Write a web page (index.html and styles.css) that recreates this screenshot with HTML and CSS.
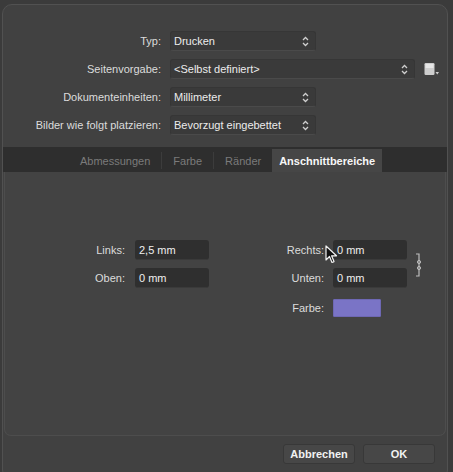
FILE: index.html
```html
<!DOCTYPE html>
<html>
<head>
<meta charset="utf-8">
<link rel="stylesheet" href="styles.css">
</head>
<body>
<div class="window">
  <div class="form">
    <div class="label">Typ:</div>
    <div class="popup w-short"><span>Drucken</span><svg class="arrows" width="7" height="11" viewBox="0 0 7 11"><path d="M1 4 L3.5 1.5 L6 4" /><path d="M1 7 L3.5 9.5 L6 7"/></svg></div>
    <div></div>

    <div class="label">Seitenvorgabe:</div>
    <div class="popup w-long"><span>&lt;Selbst definiert&gt;</span><svg class="arrows" width="7" height="11" viewBox="0 0 7 11"><path d="M1 4 L3.5 1.5 L6 4" /><path d="M1 7 L3.5 9.5 L6 7"/></svg></div>
    <div class="preset-icon"><svg width="16" height="14" viewBox="0 0 16 14"><rect x="0.5" y="1" width="10" height="12" rx="1.2" fill="#cdcdcd"/><rect x="1.5" y="2" width="8" height="4" fill="#e6e6e6"/><path d="M11.5 10 L15 10 L13.25 12.5 Z" fill="#cfcfcf"/></svg></div>

    <div class="label">Dokumenteinheiten:</div>
    <div class="popup w-short"><span>Millimeter</span><svg class="arrows" width="7" height="11" viewBox="0 0 7 11"><path d="M1 4 L3.5 1.5 L6 4" /><path d="M1 7 L3.5 9.5 L6 7"/></svg></div>
    <div></div>

    <div class="label">Bilder wie folgt platzieren:</div>
    <div class="popup w-short"><span>Bevorzugt eingebettet</span><svg class="arrows" width="7" height="11" viewBox="0 0 7 11"><path d="M1 4 L3.5 1.5 L6 4" /><path d="M1 7 L3.5 9.5 L6 7"/></svg></div>
    <div></div>
  </div>

  <div class="tabbar">
    <div class="tab">Abmessungen</div>
    <div class="sep"></div>
    <div class="tab">Farbe</div>
    <div class="sep"></div>
    <div class="tab">Ränder</div>
    <div class="tab active">Anschnittbereiche</div>
  </div>

  <div class="panel">
    <div class="fields">
      <div class="flabel l1">Links:</div>
      <div class="field">2,5 mm</div>
      <div class="flabel l2">Rechts:</div>
      <div class="field">0 mm</div>
      <div class="bracket"><svg width="8" height="25" viewBox="0 0 8 25"><path d="M1 1 H4 V23 H1" fill="none" stroke="#bdbdbd" stroke-width="1.2"/><circle cx="4" cy="9" r="1.6" fill="none" stroke="#bdbdbd" stroke-width="1"/><circle cx="4" cy="15" r="1.6" fill="none" stroke="#bdbdbd" stroke-width="1"/></svg></div>

      <div class="flabel l1">Oben:</div>
      <div class="field">0 mm</div>
      <div class="flabel l2">Unten:</div>
      <div class="field">0 mm</div>

      <div></div>
      <div></div>
      <div class="flabel l2 r3">Farbe:</div>
      <div class="swatch r3"></div>
    </div>
    <svg class="cursor" width="13" height="19" viewBox="0 0 13 19"><path d="M1 1 L1 15 L4.5 11.5 L7 17.5 L9 16.6 L6.6 10.8 L11.5 10.8 Z" fill="#111" stroke="#f2f2f2" stroke-width="1.2" stroke-linejoin="round"/></svg>
  </div>

  <div class="footer">
    <div class="btn">Abbrechen</div>
    <div class="btn">OK</div>
  </div>
</div>
</body>
</html>
```
FILE: styles.css
```css
html, body {
  margin: 0;
  padding: 0;
}
body {
  background: #3b3b3b;
  width: 453px;
  height: 472px;
  overflow: hidden;
  font-family: "Liberation Sans", Arial, sans-serif;
  font-size: 11px;
  color: #e2e2e2;
}
.window {
  position: relative;
  margin: 4px 5px 0 2px;
  height: 476px;
  background: #414141;
  border: 1px solid #515151;
  border-radius: 10px;
  box-sizing: border-box;
  display: flex;
  flex-direction: column;
}
.form {
  display: grid;
  grid-template-columns: 158px 245px 32px;
  grid-auto-rows: 20px;
  row-gap: 8px;
  column-gap: 9px;
  padding-top: 26px;
  align-items: center;
}
.label {
  text-align: right;
  color: #dcdcdc;
  white-space: nowrap;
}
.popup {
  height: 20px;
  box-sizing: border-box;
  background: #3a3a3a;
  border: 1px solid #363636;
  border-bottom-color: #4a4a4a;
  border-radius: 3px;
  display: flex;
  align-items: center;
  justify-content: space-between;
  padding: 0 6px 0 3px;
  color: #ececec;
}
.w-short { width: 146px; }
.w-long { width: 245px; }
.arrows path {
  fill: none;
  stroke: #cfcfcf;
  stroke-width: 1.3;
}
.preset-icon {
  display: flex;
  align-items: center;
  padding-left: 0;
}
.tabbar {
  margin-top: 12px;
  height: 25px;
  background: #2e2e2e;
  display: flex;
  align-items: flex-end;
  padding-left: 66px;
}
.tab {
  height: 23px;
  display: flex;
  align-items: center;
  padding: 0 11px;
  color: #7b7b7b;
}
.sep {
  width: 1px;
  height: 17px;
  margin-bottom: 3px;
  background: #3c3c3c;
}
.tab.active {
  background: #464646;
  color: #f7f7f7;
  font-weight: bold;
  width: 110px;
  box-sizing: border-box;
  justify-content: center;
  margin-left: 0;
  padding: 0;
}
.panel {
  position: relative;
  height: 264px;
  margin: 0 1px;
  background: #434343;
  border: 1px solid #4d4d4d;
  border-top: none;
  border-radius: 0 0 7px 7px;
  box-sizing: border-box;
}
.fields {
  display: grid;
  grid-template-columns: 130px 74px 124px 74px 16px;
  grid-template-rows: 20px 20px 18px;
  row-gap: 8px;
  padding-top: 68px;
  align-items: center;
}
.flabel {
  text-align: right;
  color: #dcdcdc;
}
.l1 { padding-right: 10px; }
.l2 { padding-right: 9px; }
.field {
  height: 20px;
  box-sizing: border-box;
  background: #2f2f2f;
  border-radius: 3px;
  border-bottom: 1px solid #3a3a3a;
  display: flex;
  align-items: center;
  padding-left: 4px;
  color: #f0f0f0;
}
.bracket {
  grid-row: 1 / 3;
  grid-column: 5;
  display: flex;
  justify-content: flex-end;
  align-items: center;
  padding-top: 2px;
}
.r3 { margin-top: 5px; }
.swatch {
  width: 48px;
  height: 18px;
  background: #7a74c6;
  border: 1px solid #6e68b4;
  box-sizing: border-box;
  border-radius: 1px;
}
.cursor {
  position: absolute;
  left: 320px;
  top: 73px;
}
.footer {
  display: flex;
  justify-content: flex-end;
  gap: 8px;
  padding: 8px 12px 0 0;
}
.btn {
  width: 72px;
  height: 20px;
  box-sizing: border-box;
  background: #474747;
  border: 1px solid #383838;
  border-radius: 3px;
  display: flex;
  align-items: center;
  justify-content: center;
  color: #f2f2f2;
  font-weight: bold;
}
```
